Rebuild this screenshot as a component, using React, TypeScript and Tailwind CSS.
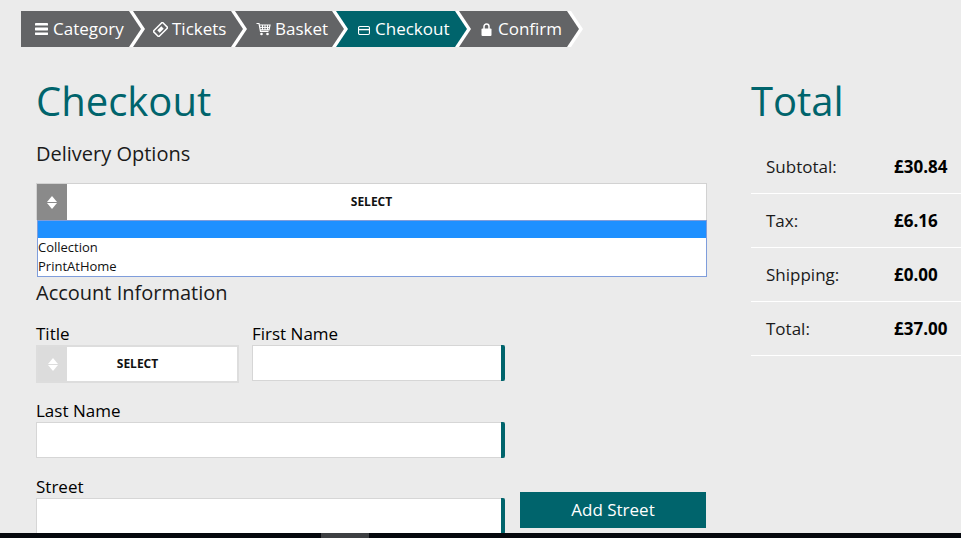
const crumbs = [
  { label: "Category", width: "w-[108px]", pad: "pl-[14px]", active: false, gap: "gap-[5px]", icon: <BarsIcon /> },
  { label: "Tickets", width: "w-[98px]", pad: "pl-[20px]", active: false, gap: "gap-[4px]", icon: <TicketIcon /> },
  { label: "Basket", width: "w-[97px]", pad: "pl-[21px]", active: false, gap: "gap-[4px]", icon: <CartIcon /> },
  { label: "Checkout", width: "w-[119px]", pad: "pl-[22px]", active: true, gap: "gap-[5px]", icon: <CardIcon /> },
  { label: "Confirm", width: "w-[108px]", pad: "pl-[22px]", active: false, gap: "gap-[6px]", icon: <LockIcon /> },
];

const totals = [
  { label: "Subtotal:", value: "£30.84" },
  { label: "Tax:", value: "£6.16" },
  { label: "Shipping:", value: "£0.00" },
  { label: "Total:", value: "£37.00" },
];

function BarsIcon() {
  return (
    <svg width="13" height="12" viewBox="0 0 13 12" fill="currentColor">
      <rect x="0" y="0" width="13" height="2.6" rx="0.4" />
      <rect x="0" y="4.6" width="13" height="2.8" rx="0.4" />
      <rect x="0" y="9.4" width="13" height="2.6" rx="0.4" />
    </svg>
  );
}

function TicketIcon() {
  return (
    <svg width="15" height="15" viewBox="0 0 15 15" fill="none" stroke="currentColor" strokeWidth="1.5">
      <rect x="1" y="3.6" width="13" height="7.8" rx="0.8" transform="rotate(-45 7.5 7.5)" />
      <rect x="4.6" y="5.8" width="5.8" height="3.4" fill="currentColor" stroke="none" transform="rotate(-45 7.5 7.5)" />
    </svg>
  );
}

function CartIcon() {
  return (
    <svg width="15" height="14" viewBox="0 0 15 14" fill="none" stroke="currentColor" strokeWidth="1.2">
      <path d="M0.5 1.5 H3 L4.5 9.5 H12.5" />
      <path d="M3.4 3 H14 L13 7.8 H4.2" />
      <path d="M6.5 3 V8 M9 3 V8 M11.5 3 V8 M4 5.4 H13.5" strokeWidth="1" />
      <circle cx="5.5" cy="12" r="1.3" fill="currentColor" stroke="none" />
      <circle cx="11.5" cy="12" r="1.3" fill="currentColor" stroke="none" />
    </svg>
  );
}

function CardIcon() {
  return (
    <svg width="12" height="9" viewBox="0 0 12 9" fill="none" stroke="currentColor" strokeWidth="1.1" className="mt-[2px]">
      <rect x="0.55" y="0.55" width="10.9" height="7.9" rx="1.2" />
      <path d="M0.6 3.6 H11.4" strokeWidth="1.4" />
    </svg>
  );
}

function LockIcon() {
  return (
    <svg width="11" height="13" viewBox="0 0 11 13">
      <path d="M3 6 V3.6 a2.5 2.5 0 0 1 5 0 V6" fill="none" stroke="currentColor" strokeWidth="1.5" />
      <rect x="0.5" y="5.5" width="10" height="7.5" rx="1" fill="currentColor" />
    </svg>
  );
}

function SortArrows() {
  return (
    <svg width="10" height="13" viewBox="0 0 10 13" fill="currentColor">
      <path d="M5 0 L10 6 H0 Z" />
      <path d="M0 7 H10 L5 13 Z" />
    </svg>
  );
}

function TextField({ className }: { className: string }) {
  return (
    <div className={`bg-white border border-[#d6d6d6] border-r-0 relative ${className}`}>
      <span className="absolute right-0 -top-px -bottom-px w-[4px] bg-[#00646c] rounded-r-[2px]" />
    </div>
  );
}

export default function App() {
  return (
    <div className="h-[538px] w-[961px] overflow-hidden flex flex-col bg-[#ebebeb] text-black font-['Open_Sans',sans-serif]">
      <div className="flex-1 min-h-0 overflow-hidden">
        {/* Steps */}
        <div className="flex gap-[4px] pl-[21px] pt-[11px]">
          {crumbs.map((c, i) => (
            <div
              key={c.label}
              className={`relative h-[36px] flex items-center text-white text-[17px] ${c.width} ${c.pad} ${c.gap} ${c.active ? "bg-[#00646c]" : "bg-[#636466]"}`}
              style={{ zIndex: 10 - i }}
            >
              {c.icon}
              <span>{c.label}</span>
              <svg width="16" height="36" viewBox="0 0 16 36" className="absolute left-full top-0">
                <path d="M0 0 H4 L16 18 L4 36 H0 Z" fill="#fff" />
                <path d="M0 0 L12 18 L0 36 Z" fill={c.active ? "#00646c" : "#636466"} />
              </svg>
            </div>
          ))}
        </div>

        <div className="flex pl-[36px] pt-[26px]">
          {/* Left column */}
          <div className="w-[671px]">
            <h1 className="text-[40px] leading-[56px] text-[#00646c]">Checkout</h1>
            <h2 className="text-[20px] leading-[28px] mt-[11px] text-[#1a1a1a]">Delivery Options</h2>

            <div className="mt-[15px]">
              <div className="h-[37px] flex bg-white border border-[#d2d2d2] border-b-0">
                <div className="w-[30px] bg-[#8a8a8a] flex items-center justify-center text-white">
                  <SortArrows />
                </div>
                <div className="flex-1 flex items-center justify-center pr-[30px] text-[12px] font-bold text-[#111]">SELECT</div>
              </div>
              <div className="h-[57px] ml-px bg-white border border-[#7f9ddb] text-[13px] leading-[19px] text-[#111]">
                <div className="h-[17px] bg-[#1e90ff]" />
                <div>Collection</div>
                <div>PrintAtHome</div>
              </div>
            </div>

            <h2 className="text-[20px] leading-[28px] text-[#1a1a1a] mt-[2px]">Account Information</h2>

            <div className="flex gap-[13px] mt-[16px] items-start">
              <div className="w-[203px]">
                <label className="block text-[17px] leading-[22px]">Title</label>
                <div className="h-[38px] flex bg-white border-2 border-[#dddddd]">
                  <div className="w-[29px] bg-[#dcdcdc] flex items-center justify-center text-white">
                    <SortArrows />
                  </div>
                  <div className="flex-1 flex items-center justify-center pr-[29px] text-[12px] font-bold text-[#111]">SELECT</div>
                </div>
              </div>
              <div>
                <label className="block text-[17px] leading-[22px]">First Name</label>
                <TextField className="w-[253px] h-[36px]" />
              </div>
            </div>

            <label className="block text-[17px] leading-[22px] mt-[17px]">Last Name</label>
            <TextField className="w-[469px] h-[36px]" />

            <div className="flex gap-[15px] mt-[18px] items-start">
              <div>
                <label className="block text-[17px] leading-[22px]">Street</label>
                <TextField className="w-[469px] h-[36px]" />
              </div>
              <button className="w-[186px] h-[36px] mt-[16px] bg-[#00646c] text-white text-[17px]">Add Street</button>
            </div>
          </div>

          {/* Total column */}
          <div className="ml-[44px] flex-1">
            <h1 className="text-[40px] leading-[56px] text-[#00646c]">Total</h1>
            <div className="mt-[11px]">
              {totals.map((t) => (
                <div key={t.label} className="h-[54px] flex items-center border-b border-white text-[17px]">
                  <span className="w-[143px] pl-[15px] text-[#1a1a1a]">{t.label}</span>
                  <span className="font-bold">{t.value}</span>
                </div>
              ))}
            </div>
          </div>
        </div>
      </div>
      {/* Scrollbar strip */}
      <div className="h-[5px] bg-[#05080d] pl-[321px] shrink-0">
        <div className="w-[48px] h-full bg-[#3d3f42]" />
      </div>
    </div>
  );
}
